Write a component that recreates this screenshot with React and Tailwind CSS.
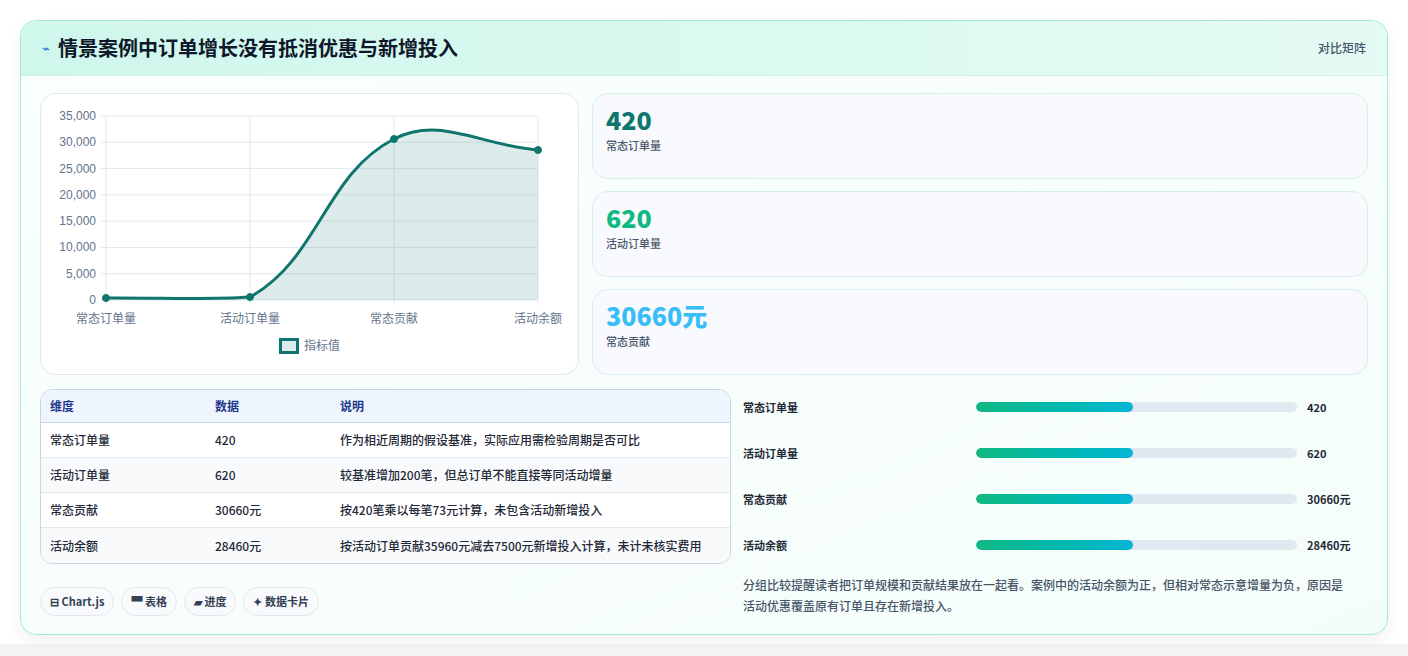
import React from "react";

const rows = [
  ["常态订单量", "420", "作为相近周期的假设基准，实际应用需检验周期是否可比"],
  ["活动订单量", "620", "较基准增加200笔，但总订单不能直接等同活动增量"],
  ["常态贡献", "30660元", "按420笔乘以每笔73元计算，未包含活动新增投入"],
  ["活动余额", "28460元", "按活动订单贡献35960元减去7500元新增投入计算，未计未核实费用"],
];

function Chart() {
  const ys = [0, 5000, 10000, 15000, 20000, 25000, 30000, 35000];
  const xs = [105, 249, 393, 537];
  const labels = ["常态订单量", "活动订单量", "常态贡献", "活动余额"];
  const line = "M105 297 C162.6 296.6, 202.7 299, 249 296 C317.9 258, 324.2 173.1, 393 138 C439.4 114.3, 479.4 144.6, 537 149";
  return (
    <svg viewBox="40 93 538 281" width="538" height="281" className="block" style={{ fontFamily: "'Liberation Sans','Noto Sans CJK SC',sans-serif" }}>
      {ys.map((v) => {
        const y = 299 - (v / 35000) * 184;
        return (
          <g key={v}>
            <line x1="100" x2="537" y1={y} y2={y} stroke="#e2e8f0" strokeWidth="1" />
            <text x="95" y={y + 4} textAnchor="end" fontSize="12" fill="#64748b">{v.toLocaleString("en-US")}</text>
          </g>
        );
      })}
      {xs.map((x, i) => (
        <g key={x}>
          <line x1={x} x2={x} y1="115" y2="304" stroke="#e2e8f0" strokeWidth="1" />
          <text x={x} y="322" textAnchor="middle" fontSize="12" fill="#64748b">{labels[i]}</text>
        </g>
      ))}
      <path d={line + " L537 299 L105 299 Z"} fill="rgba(15,118,110,0.14)" />
      <path d={line} fill="none" stroke="#0f766e" strokeWidth="3" />
      {[[105, 297], [249, 296], [393, 138], [537, 149]].map(([x, y]) => (
        <circle key={x} cx={x} cy={y} r="3.5" fill="#0f766e" stroke="#0f766e" strokeWidth="1" />
      ))}
      <rect x="279.5" y="338.5" width="17" height="13" fill="rgba(15,118,110,0.14)" stroke="#0f766e" strokeWidth="3" />
      <text x="303" y="349" fontSize="12" fill="#64748b">指标值</text>
    </svg>
  );
}

function Stat({ v, label, color }) {
  return (
    <div className="h-[86px] rounded-2xl border border-[#d6eef0] bg-[#f8fafd] px-[13px] pt-[9px]">
      <div className={`text-[25px] font-extrabold leading-[33px] ${color}`}>{v}</div>
      <div className="text-[11px] font-medium text-[#475569] mt-[1px]">{label}</div>
    </div>
  );
}

export default function App() {
  return (
    <div className="w-[1408px] h-[656px] bg-[#f3f4f6]" style={{ fontFamily: "'Noto Sans CJK SC','Noto Sans',sans-serif" }}>
      <div className="bg-white h-[644px] pt-[20px] px-[20px]">
        <div className="rounded-2xl border border-[#a7e8d8] bg-gradient-to-br from-[#f8fffd] to-[#f5fdfa] overflow-hidden h-[615px] shadow-[0_6px_16px_rgba(0,0,0,0.06)]">
          <div className="h-[55px] flex items-center justify-between px-[21px] bg-gradient-to-r from-[#cff7ec] to-[#e4fbf4] border-b border-[#d4efe9]">
            <div className="flex items-center gap-[8px]">
              <span className="text-[#2563eb] text-[13px]">⌁</span>
              <span className="text-[20px] font-bold text-[#0f172a]">情景案例中订单增长没有抵消优惠与新增投入</span>
            </div>
            <span className="text-[12px] font-medium text-[#475569]">对比矩阵</span>
          </div>
          <div className="px-[19px] pt-[17px]">
            <div className="flex gap-[13px]">
              <div className="w-[539px] h-[282px] rounded-2xl border border-[#e2e8f0] bg-white overflow-hidden">
                <Chart />
              </div>
              <div className="flex-1 flex flex-col gap-[12px]">
                <Stat v="420" label="常态订单量" color="text-[#0f766e]" />
                <Stat v="620" label="活动订单量" color="text-[#10b981]" />
                <Stat v="30660元" label="常态贡献" color="text-[#38bdf8]" />
              </div>
            </div>
            <div className="flex gap-[12px] mt-[14px]">
              <div className="w-[691px]">
                <div className="rounded-xl border border-[#cbd5e1] overflow-hidden bg-white text-[12px]">
                  <div className="flex h-[33px] items-center bg-[#eef5ff] border-b border-[#cbd5e1] font-bold text-[#1e3a8a]">
                    <div className="w-[174px] pl-[9px]">维度</div>
                    <div className="w-[125px]">数据</div>
                    <div>说明</div>
                  </div>
                  {rows.map((r, i) => (
                    <div key={i} className={`flex h-[35px] items-center font-medium text-[#1f2937] ${i % 2 ? "bg-[#f8fafc]" : "bg-white"} ${i < 3 ? "border-b border-[#e2e8f0]" : ""}`}>
                      <div className="w-[174px] pl-[9px]">{r[0]}</div>
                      <div className="w-[125px]">{r[1]}</div>
                      <div>{r[2]}</div>
                    </div>
                  ))}
                </div>
                <div className="flex gap-[7px] mt-[23px] text-[11px] text-[#334155]">
                  {["⊟ Chart.js", "▀ 表格", "▰ 进度", "✦ 数据卡片"].map((t) => (
                    <span key={t} className="rounded-full border border-[#e2e8f0] bg-[#f8fafc] px-[9px] h-[29px] flex items-center font-bold">{t}</span>
                  ))}
                </div>
              </div>
              <div className="flex-1 -mt-[5px]">
                {[["常态订单量", "420"], ["活动订单量", "620"], ["常态贡献", "30660元"], ["活动余额", "28460元"]].map(([l, v]) => (
                  <div key={l} className="flex items-center h-[46px] text-[11px] text-[#1f2937]">
                    <div className="w-[233px] font-bold">{l}</div>
                    <div className="w-[321px] h-[10px] rounded-full bg-[#e2e8f0] overflow-hidden">
                      <div className="h-full w-[49%] rounded-full bg-gradient-to-r from-[#10b981] to-[#06b6d4]" />
                    </div>
                    <div className="ml-[10px] font-bold">{v}</div>
                  </div>
                ))}
                <p className="mt-[6px] text-[12px] font-medium leading-[21px] text-[#475569] pr-[20px]">分组比较提醒读者把订单规模和贡献结果放在一起看。案例中的活动余额为正，但相对常态示意增量为负，原因是活动优惠覆盖原有订单且存在新增投入。</p>
              </div>
            </div>
          </div>
        </div>
      </div>
    </div>
  );
}
